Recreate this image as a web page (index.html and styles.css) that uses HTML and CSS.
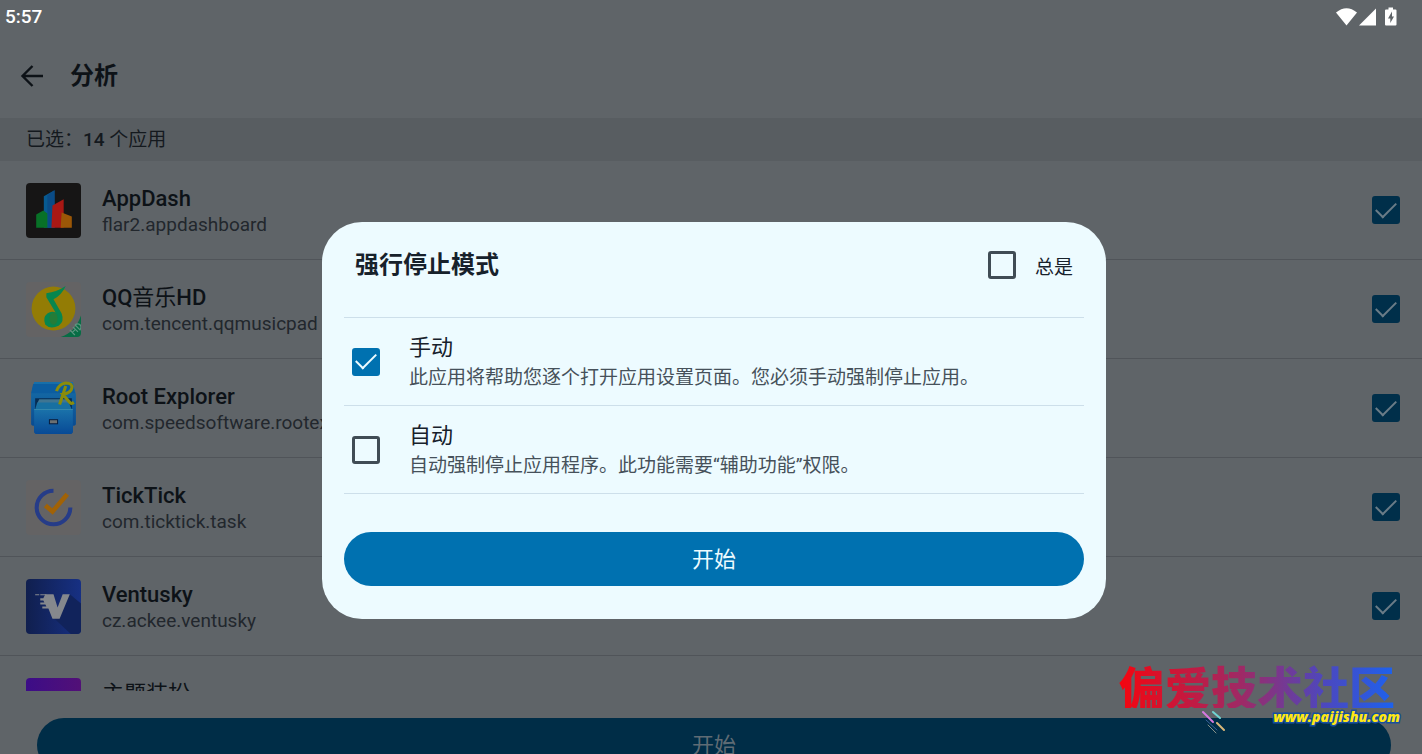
FILE: index.html
```html
<!DOCTYPE html>
<html lang="zh-CN">

<head>
    <meta charset="UTF-8">
    <meta name="viewport" content="width=device-width, initial-scale=1.0">
    <title>分析</title>
    <link rel="stylesheet" href="styles.css">
</head>

<body>
    <div class="status-bar">
        <span class="clock">5:57</span>
        <svg class="status-icons" width="64" height="20" viewBox="0 0 64 20" fill="#fff">
            <path d="M0 5.500Q10.500-3 21 5.500L10.500 18.500Z" />
            <path d="M40 1.500V18.500H23Z" />
            <path fill-rule="evenodd" d="M52.500 0.500h4.500v2h2.500q1 0 1 1v14q0 1-1 1h-9.500q-1 0-1-1v-14q0-1 1-1h2.500zM56 4.500l-4 7h2.300v4.500l3.700-6.500h-2z" />
        </svg>
    </div>

    <header class="app-bar">
        <button class="back" aria-label="返回">
            <svg width="24" height="24" viewBox="0 0 24 24" fill="none" stroke="#0d1217" stroke-width="2.400">
                <path d="M23 12H3M12.500 2L2.500 12l10 10" />
            </svg>
        </button>
        <h1>分析</h1>
    </header>

    <div class="selected-bar">已选：<b>14</b> 个应用</div>

    <ul class="app-list">
        <li class="app">
            <svg class="app-icon" viewBox="0 0 54 54">
                <rect width="54" height="54" rx="4" fill="#161515" />
                <path d="M17.500 13L28 7v37H17.500z" fill="#075a91" />
                <path d="M21 12l7-5v37h-7z" fill="#0a4b86" />
                <path d="M10 31l7-4 4 3v14H10z" fill="#087127" />
                <path d="M26 22l11-6v28H25z" fill="#a91814" />
                <path d="M35 29l10 4v11H34z" fill="#9b5707" />
            </svg>
            <label class="app-text" for="app1">
                <span class="app-name">AppDash</span>
                <span class="app-package">flar2.appdashboard</span>
            </label>
            <input type="checkbox" id="app1" checked>
        </li>
        <li class="app">
            <svg class="app-icon" viewBox="0 0 54 54">
                <rect width="54" height="54" rx="4" fill="#646364" />
                <circle cx="27" cy="26" r="21.500" fill="#937c05" />
                <path d="M20 11q10-1 19-7-4 9-12 13l8 14q3 8-3 12-8 4-13-1-3-7 2-11 4-3 8-1l-9-15z" fill="#07864e" />
                <ellipse cx="27" cy="36" rx="4" ry="6" fill="#247c38" />
                <path d="M54 33v17q0 4-4 4H34q14-4 20-21z" fill="#076d45" />
                <path d="M43 47l5 5M46 44l5 5M45.500 49.500l3-3M48 42l5 5q2-3 0-5t-5 0" fill="none" stroke="#5d9580" stroke-width="1.200" />
            </svg>
            <label class="app-text" for="app2">
                <span class="app-name">QQ<span class="han">音乐</span>HD</span>
                <span class="app-package">com.tencent.qqmusicpad</span>
            </label>
            <input type="checkbox" id="app2" checked>
        </li>
        <li class="app">
            <svg class="app-icon" viewBox="0 0 54 54">
                <defs>
                    <linearGradient id="cabinet" x1="0" y1="0" x2="0" y2="1">
                        <stop offset="0" stop-color="#1770aa" />
                        <stop offset="1" stop-color="#07458c" />
                    </linearGradient>
                    <linearGradient id="drawer" x1="0" y1="0" x2="0" y2="1">
                        <stop offset="0" stop-color="#1a72aa" />
                        <stop offset="1" stop-color="#084a96" />
                    </linearGradient>
                </defs>
                <path d="M8 1h38l3 12v29q0 2-3 2v5q0 3-3 3H11q-3 0-3-3v-5q-3 0-3-2V13z" fill="url(#cabinet)" />
                <path d="M7 3h39l2 9H5z" fill="#0c5da0" />
                <path d="M9 17h36v11H9z" fill="#072c52" />
                <path d="M13 18h27l2 4H11z" fill="#3f7592" />
                <path d="M11 21h31l3 7H9z" fill="#1870a1" />
                <path d="M8 28h38v21q0 3-3 3H11q-3 0-3-3z" fill="url(#drawer)" />
                <path d="M8 28h38" stroke="#3487ab" />
                <rect x="23" y="38" width="8" height="4" fill="#6b7072" stroke="#071e40" />
                <path d="M30 10q2-7 9-8 7 0 6 5-1 5-9 6l7 8q1 2 4 0M39 5l-6 18" fill="none" stroke="#8b8c0a" stroke-width="3" />
            </svg>
            <label class="app-text" for="app3">
                <span class="app-name">Root Explorer</span>
                <span class="app-package">com.speedsoftware.rootexplorer</span>
            </label>
            <input type="checkbox" id="app3" checked>
        </li>
        <li class="app">
            <svg class="app-icon" viewBox="0 0 54 54" fill="none">
                <rect width="54" height="54" rx="4" fill="#646364" />
                <path d="M27 10.500A16.500 16.500 0 1 0 43.500 27" stroke="#263c88" stroke-width="4" />
                <path d="M19 25l7 6L40.500 14" stroke="#a16206" stroke-width="4.500" />
            </svg>
            <label class="app-text" for="app4">
                <span class="app-name">TickTick</span>
                <span class="app-package">com.ticktick.task</span>
            </label>
            <input type="checkbox" id="app4" checked>
        </li>
        <li class="app">
            <svg class="app-icon" viewBox="0 0 54 54">
                <defs>
                    <linearGradient id="sky">
                        <stop offset="0" stop-color="#101f4e" />
                        <stop offset="1" stop-color="#173083" />
                    </linearGradient>
                </defs>
                <rect width="54" height="54" rx="4" fill="url(#sky)" />
                <path d="M43 15l11 9v26q0 4-4 4h-6L27 38z" fill="#11235b" />
                <path d="M19 15h8l4 13 5-13h7L33 39h-7l-4-10h-6v-2h4l-1-2h-5v-2h4l-1-2h-3v-2h3z" fill="#85888d" />
                <path d="M9 15.500h4M14 15.500h6" stroke="#85888d" />
            </svg>
            <label class="app-text" for="app5">
                <span class="app-name">Ventusky</span>
                <span class="app-package">cz.ackee.ventusky</span>
            </label>
            <input type="checkbox" id="app5" checked>
        </li>
        <li class="app">
            <svg class="app-icon" viewBox="0 0 54 54">
                <defs>
                    <linearGradient id="theme">
                        <stop offset="0" stop-color="#3c0d87" />
                        <stop offset="1" stop-color="#521077" />
                    </linearGradient>
                </defs>
                <rect width="54" height="54" rx="4" fill="url(#theme)" />
            </svg>
            <label class="app-text" for="app6">
                <span class="app-name"><span class="han">主题装扮</span></span>
            </label>
            <input type="checkbox" id="app6" checked>
        </li>
    </ul>

    <footer class="bottom-bar">
        <button class="start start-page">开始</button>
    </footer>

    <div class="overlay">
        <div class="dialog" role="dialog" aria-labelledby="dialog-title">
            <div class="dialog-header">
                <h2 id="dialog-title">强行停止模式</h2>
                <input type="checkbox" id="always">
                <label for="always">总是</label>
            </div>
            <div class="option">
                <input type="checkbox" id="manual" checked>
                <label for="manual">
                    <span class="option-name">手动</span>
                    <span class="option-info">此应用将帮助您逐个打开应用设置页面。您必须手动强制停止应用。</span>
                </label>
            </div>
            <div class="option">
                <input type="checkbox" id="auto">
                <label for="auto">
                    <span class="option-name">自动</span>
                    <span class="option-info">自动强制停止应用程序。此功能需要“辅助功能”权限。</span>
                </label>
            </div>
            <button class="start">开始</button>
        </div>
    </div>

    <div class="watermark">
        <div class="watermark-name">偏爱技术社区</div>
        <div class="watermark-line">
            <svg width="24" height="24" viewBox="0 0 24 24" fill="none" stroke-linecap="round">
                <path d="M2 2l10 10" stroke="#d779df" stroke-width="2" />
                <path d="M12 2l7 6" stroke="#70d5d2" stroke-width="2" />
                <path d="M16 13l7 7" stroke="#d9b779" stroke-width="2" />
                <path d="M5 10l11 10" stroke="#385f9c" />
                <path d="M7 15l8 8" stroke="#87928a" />
            </svg>
            <span class="watermark-url">www.paijishu.com</span>
        </div>
    </div>
</body>

</html>
```
FILE: styles.css
```css
* {
    box-sizing: border-box;
}

body {
    display: flex;
    flex-direction: column;
    height: 100vh;
    margin: 0;
    overflow: hidden;
    background-color: #5f6468;
    color: #0d1217;
    font-family: Roboto, "Noto Sans CJK SC", sans-serif;
    font-size: 19px;
}

h1, h2 {
    margin: 0;
    font-size: 24px;
    font-weight: bold;
    line-height: 32px;
}

button {
    border: none;
    padding: 0;
    background: none;
    font-family: inherit;
}

/* Status bar */
.status-bar {
    display: flex;
    flex: none;
    align-items: center;
    justify-content: space-between;
    height: 33px;
    padding: 0 22px 0 5px;
    color: #fff;
}

.clock {
    font-weight: 500;
}

/* Title */
.app-bar {
    display: flex;
    flex: none;
    align-items: center;
    gap: 26px;
    height: 85px;
    padding: 0 20px;
}

.back {
    display: flex;
}

.selected-bar {
    flex: none;
    padding: 1px 26px 0;
    background-color: #585d61;
    color: #14191e;
    line-height: 42px;
}

.selected-bar b {
    font-weight: 500;
}

/* App list */
.app-list {
    flex: 1;
    min-height: 0;
    margin: 0;
    padding: 0;
    overflow: hidden;
    list-style: none;
}

.app {
    display: flex;
    align-items: center;
    gap: 21px;
    height: 99px;
    padding: 0 22px 0 26px;
    border-bottom: 1px solid #505459;
}

.app-icon {
    flex: none;
    width: 55px;
    height: 55px;
}

.app-text {
    flex: 1;
    min-height: 56px;
    padding-top: 4px;
}

.app-name, .app-package {
    display: block;
    line-height: 26px;
}

.app-name {
    font-size: 22px;
    font-weight: 500;
}

.han {
    font-weight: normal;
}

.app-package {
    color: #22272d;
}

/* Checkboxes */
input[type="checkbox"] {
    display: grid;
    flex: none;
    place-items: center;
    width: 28px;
    height: 28px;
    margin: 0;
    border: 3px solid #404c55;
    border-radius: 3px;
    appearance: none;
}

input[type="checkbox"]:checked {
    border-color: #0071b0;
    background-color: #0071b0;
}

input[type="checkbox"]:checked::before {
    content: "";
    width: 18px;
    height: 9px;
    margin-bottom: 6px;
    border: solid #edfbff;
    border-width: 0 0 2px 2px;
    transform: rotate(-45deg);
}

.app input[type="checkbox"]:checked {
    border-color: #002f4a;
    background-color: #002f4a;
}

.app input[type="checkbox"]:checked::before {
    border-color: #6a7c87;
}

/* Buttons */
.start {
    width: 100%;
    height: 54px;
    padding-bottom: 4px;
    border-radius: 27px;
    background-color: #0071b0;
    color: #edfbff;
    font-size: 22px;
}

.bottom-bar {
    flex: none;
    height: 63px;
    padding: 27px 31px 0 37px;
}

.start-page {
    background-color: #002d47;
    color: #5f6b74;
}

/* Dialog */
.overlay {
    position: absolute;
    inset: 0;
    display: flex;
    align-items: center;
    justify-content: center;
    padding: 87px 0 0 6px;
}

.dialog {
    width: 784px;
    max-width: 100%;
    padding: 0 22px 33px;
    border-radius: 40px;
    background-color: #edfbff;
    color: #17212b;
}

.dialog-header {
    display: flex;
    align-items: center;
    padding: 27px 11px 36px;
}

.dialog-header h2 {
    flex: 1;
}

.dialog-header label {
    margin-left: 19px;
}

.option {
    display: flex;
    align-items: center;
    gap: 29px;
    height: 88px;
    padding: 0 8px;
    border-top: 1px solid #cddfea;
}

.option + .option {
    height: 89px;
    border-bottom: 1px solid #cddfea;
}

.option label {
    padding-top: 3px;
}

.option-name, .option-info {
    display: block;
    line-height: 30px;
}

.option-name {
    font-size: 22px;
}

.option-info {
    color: #46515a;
}

.dialog .start {
    margin-top: 38px;
}

/* Site mark */
.watermark {
    position: absolute;
    right: 22px;
    bottom: 20px;
    pointer-events: none;
}

.watermark-name {
    margin-right: 5px;
    background: linear-gradient(to right, #f5050f, #9d2a67 45%, #4b48c0 75%, #1c62ee);
    background-clip: text;
    -webkit-background-clip: text;
    color: transparent;
    font-family: "Noto Sans CJK SC", sans-serif;
    font-size: 46px;
    font-weight: 900;
    line-height: 46px;
}

.watermark-line {
    display: flex;
    align-items: flex-start;
    justify-content: flex-end;
    gap: 48px;
    height: 26px;
    padding-top: 2px;
}

.watermark-url {
    color: #ffe715;
    font-family: "Open Sans", sans-serif;
    font-size: 14px;
    font-style: italic;
    font-weight: 800;
    line-height: 14px;
    paint-order: stroke fill;
    -webkit-text-stroke: 3px #174f9f;
}
```
